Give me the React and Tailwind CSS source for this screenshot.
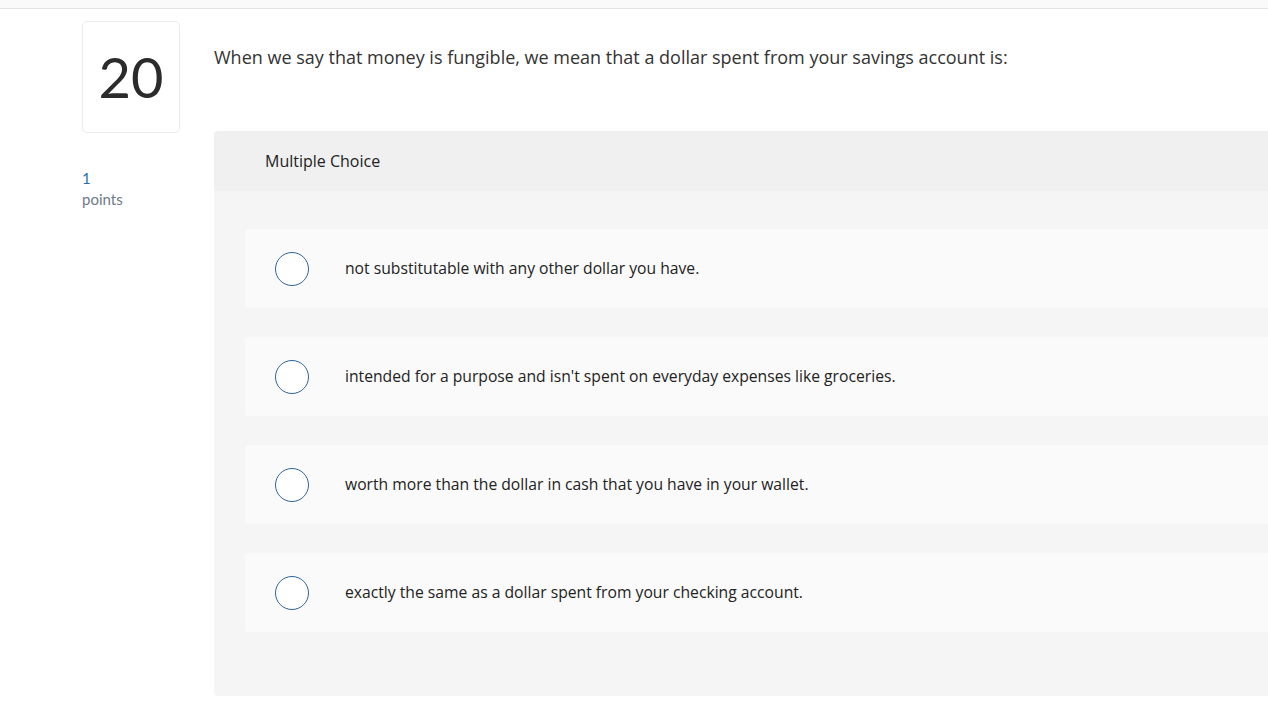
import { useState } from 'react';

const options = [
  'not substitutable with any other dollar you have.',
  "intended for a purpose and isn't spent on everyday expenses like groceries.",
  'worth more than the dollar in cash that you have in your wallet.',
  'exactly the same as a dollar spent from your checking account.',
];

export default function App() {
  const [picked, setPicked] = useState(null);

  return (
    <div className="h-[712px] overflow-hidden bg-white text-[#333] font-['Open_Sans','Lato',sans-serif]">
      <div className="h-[9px] bg-[#fafafa] border-b border-[#e6e6e6]" />

      <div className="flex pl-[82px] pt-[12px]">
        <div className="w-[132px] shrink-0">
          <div className="w-[98px] h-[112px] rounded-[5px] border border-[#ebebeb] flex items-center justify-center text-[56px] text-[#2b2b2b] leading-none font-['Lato',sans-serif]">
            20
          </div>
          <div className="mt-[35px] text-[15px] leading-[21px] font-['Lato',sans-serif]">
            <div className="text-[#1f6fb5]">1</div>
            <div className="text-[#6b7a88]">points</div>
          </div>
        </div>

        <div className="flex-1 min-w-0">
          <p className="pt-[24px] text-[18px] leading-[24px] text-[#333] whitespace-nowrap">
            When we say that money is fungible, we mean that a dollar spent from your savings account is:
          </p>

          <div className="mt-[62px] rounded-l-[4px] overflow-hidden">
            <div className="h-[60px] bg-[#f0f0f0] flex items-center pl-[51px] text-[16px] text-[#222]">
              Multiple Choice
            </div>
            <div className="bg-[#f5f5f5] pt-[38px] pb-[64px] pl-[31px] flex flex-col gap-[29px]">
              {options.map((text, i) => (
                <button
                  key={i}
                  type="button"
                  onClick={() => setPicked(i)}
                  className="h-[79px] bg-[#fafafa] rounded-l-[3px] flex items-center text-left"
                >
                  <span className="ml-[30px] w-[34px] h-[34px] rounded-full border-[1.5px] border-[#2e6399] bg-white flex items-center justify-center shrink-0">
                    {picked === i && <span className="w-[18px] h-[18px] rounded-full bg-[#2e6399]" />}
                  </span>
                  <span className="ml-[36px] text-[15.7px] text-[#222]">{text}</span>
                </button>
              ))}
            </div>
          </div>
        </div>
      </div>
    </div>
  );
}
